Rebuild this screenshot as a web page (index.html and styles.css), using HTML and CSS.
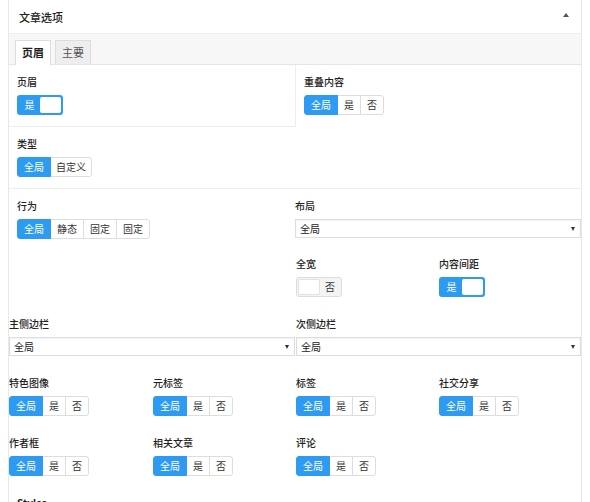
FILE: index.html
```html
<!DOCTYPE html>
<html lang="zh">
<head>
<meta charset="utf-8">
<title>文章选项</title>
<link rel="stylesheet" href="styles.css">
</head>
<body>
<div class="panel">
  <div class="panel-head">
    <span class="panel-title">文章选项</span>
    <span class="collapse"></span>
  </div>
  <div class="tabs">
    <div class="tab active">页眉</div>
    <div class="tab">主要</div>
  </div>

  <div class="sec-header">
    <div class="row-top">
      <div class="field box">
        <div class="label">页眉</div>
        <div class="switch on"><span class="switch-text">是</span><span class="knob"></span></div>
      </div>
      <div class="field overlap">
        <div class="label">重叠内容</div>
        <div class="btn-group"><span class="btn active">全局</span><span class="btn">是</span><span class="btn">否</span></div>
      </div>
    </div>
    <div class="field type-field">
      <div class="label">类型</div>
      <div class="btn-group"><span class="btn active">全局</span><span class="btn btn-wide">自定义</span></div>
    </div>
  </div>

  <div class="sec-behavior">
    <div class="col-left field">
      <div class="label">行为</div>
      <div class="btn-group"><span class="btn active">全局</span><span class="btn">静态</span><span class="btn">固定</span><span class="btn">固定</span></div>
    </div>
    <div class="col-right">
      <div class="field">
        <div class="label">布局</div>
        <div class="select"><span>全局</span><span class="caret"></span></div>
      </div>
      <div class="sub-row">
        <div class="field sub-a">
          <div class="label">全宽</div>
          <div class="switch off"><span class="knob"></span><span class="switch-text">否</span></div>
        </div>
        <div class="field sub-b">
          <div class="label">内容间距</div>
          <div class="switch on"><span class="switch-text">是</span><span class="knob"></span></div>
        </div>
      </div>
    </div>
  </div>

  <div class="sec-sidebars">
    <div class="field side-a">
      <div class="label">主侧边栏</div>
      <div class="select"><span>全局</span><span class="caret"></span></div>
    </div>
    <div class="field side-b">
      <div class="label">次侧边栏</div>
      <div class="select"><span>全局</span><span class="caret"></span></div>
    </div>
  </div>

  <div class="grid4">
    <div class="field">
      <div class="label">特色图像</div>
      <div class="btn-group"><span class="btn active">全局</span><span class="btn">是</span><span class="btn">否</span></div>
    </div>
    <div class="field">
      <div class="label">元标签</div>
      <div class="btn-group"><span class="btn active">全局</span><span class="btn">是</span><span class="btn">否</span></div>
    </div>
    <div class="field">
      <div class="label">标签</div>
      <div class="btn-group"><span class="btn active">全局</span><span class="btn">是</span><span class="btn">否</span></div>
    </div>
    <div class="field">
      <div class="label">社交分享</div>
      <div class="btn-group"><span class="btn active">全局</span><span class="btn">是</span><span class="btn">否</span></div>
    </div>
  </div>

  <div class="grid4">
    <div class="field">
      <div class="label">作者框</div>
      <div class="btn-group"><span class="btn active">全局</span><span class="btn">是</span><span class="btn">否</span></div>
    </div>
    <div class="field">
      <div class="label">相关文章</div>
      <div class="btn-group"><span class="btn active">全局</span><span class="btn">是</span><span class="btn">否</span></div>
    </div>
    <div class="field">
      <div class="label">评论</div>
      <div class="btn-group"><span class="btn active">全局</span><span class="btn">是</span><span class="btn">否</span></div>
    </div>
  </div>

  <div class="styles-head">
    <div class="label">Styles</div>
  </div>
</div>
</body>
</html>
```

FILE: styles.css
```css
* { box-sizing: border-box; }

body {
  margin: 0;
  background: #fff;
  font-family: "Noto Sans CJK SC", "Noto Sans", "Liberation Sans", sans-serif;
  color: #222;
}

.panel {
  margin-left: 8px;
  width: 574px;
  height: 502px;
  overflow: hidden;
  border-left: 1px solid #e8e8e8;
  border-right: 1px solid #e8e8e8;
  background: #fff;
}

.panel-head {
  height: 34px;
  border-bottom: 1px solid #eee;
  display: flex;
  align-items: center;
  justify-content: space-between;
  padding: 0 12px 0 10px;
  font-size: 11px;
  font-weight: 500;
}

.collapse {
  width: 0;
  height: 0;
  border-left: 3px solid transparent;
  border-right: 3px solid transparent;
  border-bottom: 4px solid #555;
  margin-top: -3px;
}

.tabs {
  height: 31px;
  background: #f7f7f7;
  border-bottom: 1px solid #e5e5e5;
  display: flex;
  align-items: flex-start;
  gap: 4px;
  padding: 6px 0 0 6px;
}

.tab {
  height: 24px;
  padding: 0 6px;
  border: 1px solid #ddd;
  border-bottom: none;
  background: #eee;
  color: #555;
  font-size: 11px;
  line-height: 23px;
}

.tab.active {
  height: 25px;
  background: #fff;
  color: #222;
  font-weight: bold;
}

.label {
  font-size: 10px;
  font-weight: 500;
  line-height: 14px;
  height: 14px;
  margin-bottom: 6px;
  white-space: nowrap;
}

/* section 1 */
.row-top { display: flex; }

.box {
  width: 287px;
  height: 62px;
  border-right: 1px solid #eee;
  border-bottom: 1px solid #eee;
  padding: 10px 0 0 8px;
}

.overlap { padding: 10px 0 0 8px; }

.type-field {
  padding: 10px 8px 11px;
  border-bottom: 1px solid #eee;
}

/* section 2 */
.sec-behavior {
  display: flex;
  padding-top: 10px;
}

.col-left {
  width: 286px;
  padding-left: 8px;
}

.col-right { width: 286px; }

.sub-row {
  display: flex;
  margin-top: 19px;
}

.sub-a { width: 144px; padding-left: 1px; }
.sub-b { flex: 1; }

/* section 3 */
.sec-sidebars {
  display: flex;
  gap: 1px;
  margin-top: 20px;
}

.side-a { width: 286px; }
.side-b { flex: 1; }

/* grids */
.grid4 {
  display: grid;
  grid-template-columns: 144px 143px 143px 142px;
  margin-top: 20px;
}

.styles-head {
  margin-top: 20px;
  padding-left: 8px;
}

.styles-head .label { font-weight: bold; }

/* controls */
.btn-group {
  display: flex;
  width: max-content;
  height: 20px;
}

.btn {
  position: relative;
  height: 20px;
  padding: 0 6px;
  border: 1px solid #ddd;
  margin-left: -1px;
  background: #fff;
  color: #333;
  font-size: 10px;
  line-height: 18px;
  white-space: nowrap;
}

.btn.btn-wide { padding: 0 5px; }

.btn:first-child {
  margin-left: 0;
  border-radius: 3px 0 0 3px;
}

.btn:last-child { border-radius: 0 3px 3px 0; }

.btn.active {
  z-index: 1;
  background: #2e9bf2;
  border-color: #2e9bf2;
  color: #fff;
}

.switch {
  display: flex;
  width: 46px;
  height: 20px;
  border-radius: 3px;
  padding: 2px;
}

.switch.on { background: #2e9bf2; }

.switch.off {
  background: #f4f4f4;
  border: 1px solid #ddd;
  padding: 1px;
}

.switch-text {
  flex: 1;
  font-size: 10px;
  line-height: 16px;
  text-align: center;
}

.switch.on .switch-text { color: #fff; }
.switch.off .switch-text { color: #333; }

.knob {
  width: 21px;
  background: #fff;
  border-radius: 2px;
}

.switch.off .knob {
  width: 22px;
  border: 1px solid #e2e2e2;
}

.select {
  height: 19px;
  border: 1px solid #ddd;
  display: flex;
  align-items: center;
  justify-content: space-between;
  padding: 0 5px 0 4px;
  font-size: 10px;
  background: #fff;
  box-shadow: inset 0 1px 2px rgba(0, 0, 0, 0.06);
}

.caret {
  width: 0;
  height: 0;
  border-left: 2.5px solid transparent;
  border-right: 2.5px solid transparent;
  border-top: 4px solid #333;
}
```
